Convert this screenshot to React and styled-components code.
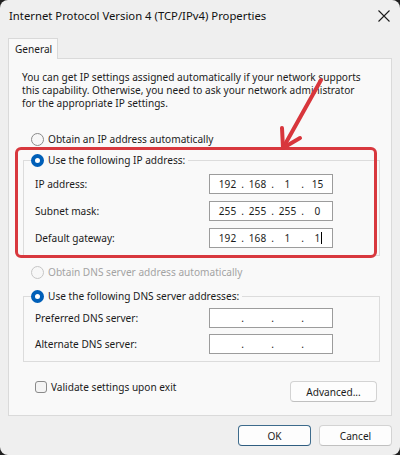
import React from 'react';
import styled, { createGlobalStyle } from 'styled-components';

const Global = createGlobalStyle`
  html, body { margin: 0; padding: 0; background: #202020; }
  body { font-family: "Noto Sans", "Open Sans", sans-serif; }
  * { box-sizing: border-box; }
`;

const Window = styled.div`
  position: relative;
  width: 400px;
  height: 455px;
  background: #efefef;
  border-radius: 8px;
  overflow: hidden;
  display: flex;
  flex-direction: column;
  color: #1b1b1b;
  font-size: 10.1px;
`;

const TitleBar = styled.div`
  height: 31px;
  display: flex;
  align-items: center;
  justify-content: space-between;
  padding: 0 10px 0 9px;
`;

const Title = styled.div`
  font-size: 11.3px;
  color: #111;
`;

const CloseIcon = styled.svg`
  width: 12px;
  height: 12px;
  display: block;
`;

const TabStrip = styled.div`
  display: flex;
  margin: 7px 0 0 8px;
  position: relative;
  z-index: 1;
`;

const Tab = styled.div`
  width: 50px;
  height: 21px;
  background: #f9f9f9;
  border: 1px solid #d9d9d9;
  border-bottom: none;
  margin-bottom: -1px;
  padding-left: 6px;
  display: flex;
  align-items: center;
`;

const Panel = styled.div`
  margin: 0 8px 0 8px;
  height: 358px;
  border: 1px solid #dadada;
  background: #f9f9f9;
  padding: 12px 11px 0 13px;
  display: flex;
  flex-direction: column;
`;

const Intro = styled.p`
  margin: 0;
  line-height: 13px;
  white-space: nowrap;
`;

const RadioRow = styled.label`
  display: flex;
  align-items: center;
  gap: 4px;
  height: 16px;
  margin-top: ${p => p.$mt || 0}px;
  margin-left: ${p => p.$ml || 0}px;
  color: ${p => (p.$disabled ? '#a3a3a3' : '#1b1b1b')};
  white-space: nowrap;
`;

const RadioDot = styled.span`
  width: 13px;
  height: 13px;
  border-radius: 50%;
  flex: none;
  background: ${p => (p.$checked ? '#ffffff' : '#f7f7f7')};
  border: ${p =>
    p.$checked ? '4px solid #005fb8' : p.$disabled ? '1px solid #c6c6c6' : '1px solid #8a8a8a'};
`;

const Group = styled.fieldset`
  margin: ${p => p.$mt || 0}px 0 0 1px;
  padding: ${p => p.$pt || 6}px 0 7px 11px;
  border: 1px solid #dcdcdc;
  min-inline-size: 0;
  display: flex;
  flex-direction: column;
  gap: ${p => p.$gap || 7}px;
`;

const Legend = styled.legend`
  padding: 0 3px 0 0;
  margin-left: -4px;
`;

const FieldRow = styled.div`
  display: grid;
  grid-template-columns: 174px 124px;
  align-items: center;
  height: 20px;
`;

const IPBox = styled.div`
  width: 124px;
  height: 20px;
  background: #ffffff;
  border: 1px solid #9c9c9c;
  display: grid;
  grid-template-columns: 25px 5px 25px 5px 25px 5px 25px;
  padding-left: 5px;
  align-items: center;
  line-height: 18px;
`;

const Seg = styled.span`
  text-align: center;
  position: relative;
`;

const Caret = styled.span`
  position: absolute;
  top: 3px;
  width: 1px;
  height: 12px;
  background: #000;
  margin-left: 1px;
`;

const BottomRow = styled.div`
  display: flex;
  justify-content: space-between;
  align-items: flex-start;
  margin-top: 19px;
  padding: 0 3px 0 13px;
`;

const CheckRow = styled.label`
  display: flex;
  align-items: center;
  gap: 4px;
  height: 12px;
`;

const CheckBox = styled.span`
  width: 12px;
  height: 12px;
  border: 1px solid #8a8a8a;
  border-radius: 3px;
  background: #f4f4f4;
`;

const Button = styled.div`
  width: ${p => p.$w || 73}px;
  height: ${p => p.$h || 21}px;
  margin-top: ${p => p.$mt || 0}px;
  border: 1px solid ${p => (p.$primary ? '#3d6b8c' : '#d3d3d3')};
  border-bottom-color: ${p => (p.$primary ? '#2f5d80' : '#c0c0c0')};
  border-radius: 4px;
  background: #fdfdfd;
  display: flex;
  align-items: center;
  justify-content: center;
  color: #1b1b1b;
`;

const Footer = styled.div`
  display: flex;
  justify-content: flex-end;
  gap: 8px;
  margin-top: 9px;
  padding-right: 8px;
`;

const Highlight = styled.div`
  position: absolute;
  left: 15px;
  top: 147px;
  width: 362px;
  height: 111px;
  border: 3px solid #d8383e;
  border-radius: 6px;
  pointer-events: none;
`;

const ArrowSvg = styled.svg`
  position: absolute;
  left: 0;
  top: 0;
  width: 400px;
  height: 455px;
  pointer-events: none;
`;

function Radio({ checked, disabled, children, mt, ml }) {
  return (
    <RadioRow $mt={mt} $ml={ml} $disabled={disabled}>
      <RadioDot $checked={checked} $disabled={disabled} />
      {children}
    </RadioRow>
  );
}

function IPField({ parts = ['', '', '', ''], caret }) {
  const items = [];
  parts.forEach((p, i) => {
    items.push(
      <Seg key={'s' + i}>
        {p}
        {caret && i === 3 ? <Caret /> : null}
      </Seg>
    );
    if (i < 3) items.push(<Seg key={'d' + i}>.</Seg>);
  });
  return <IPBox>{items}</IPBox>;
}

function Field({ label, parts, caret }) {
  return (
    <FieldRow>
      <span>{label}</span>
      <IPField parts={parts} caret={caret} />
    </FieldRow>
  );
}

export default function App() {
  return (
    <>
      <Global />
      <Window>
        <TitleBar>
          <Title>Internet Protocol Version 4 (TCP/IPv4) Properties</Title>
          <CloseIcon viewBox="0 0 12 12">
            <path d="M0.5 0.5 L11.5 11.5 M11.5 0.5 L0.5 11.5" stroke="#1b1b1b" strokeWidth="1.1" />
          </CloseIcon>
        </TitleBar>
        <TabStrip>
          <Tab>General</Tab>
        </TabStrip>
        <Panel>
          <Intro>
            You can get IP settings assigned automatically if your network supports
            <br />
            this capability. Otherwise, you need to ask your network administrator
            <br />
            for the appropriate IP settings.
          </Intro>
          <Radio mt={21} ml={9}>Obtain an IP address automatically</Radio>
          <Group $mt={5}>
            <Legend>
              <Radio checked>Use the following IP address:</Radio>
            </Legend>
            <Field label="IP address:" parts={['192', '168', '1', '15']} />
            <Field label="Subnet mask:" parts={['255', '255', '255', '0']} />
            <Field label="Default gateway:" parts={['192', '168', '1', '1']} caret />
          </Group>
          <Radio mt={8} ml={9} disabled>Obtain DNS server address automatically</Radio>
          <Group $mt={8} $pt={4} $gap={6}>
            <Legend>
              <Radio checked>Use the following DNS server addresses:</Radio>
            </Legend>
            <Field label="Preferred DNS server:" />
            <Field label="Alternate DNS server:" />
          </Group>
          <BottomRow>
            <CheckRow>
              <CheckBox />
              Validate settings upon exit
            </CheckRow>
            <Button $w={87} $h={21}>Advanced...</Button>
          </BottomRow>
        </Panel>
        <Footer>
          <Button $primary>OK</Button>
          <Button>Cancel</Button>
        </Footer>
        <Highlight />
        <ArrowSvg viewBox="0 0 400 455">
          <g stroke="#d8363c" strokeWidth="4" strokeLinecap="round" strokeLinejoin="round" fill="none">
            <path d="M321 80 L283 148" />
            <path d="M282 128 L283 148 L300 138" />
          </g>
        </ArrowSvg>
      </Window>
    </>
  );
}
